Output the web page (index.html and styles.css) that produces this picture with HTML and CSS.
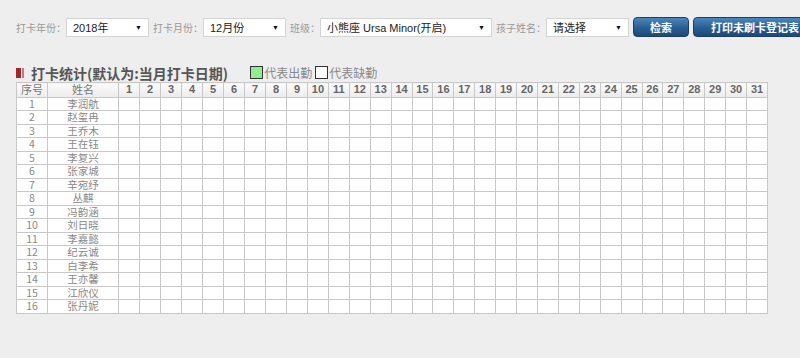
FILE: index.html
```html
<!DOCTYPE html>
<html lang="zh-CN">
<head>
    <meta charset="UTF-8">
    <title>打卡统计</title>
    <link rel="stylesheet" href="styles.css">
</head>
<body>
    <div class="page">
        <!-- 查询条件 -->
        <div class="toolbar">
            <span class="label">打卡年份：</span>
            <div class="select w-sm"><span>2018年</span><i>▼</i></div>
            <span class="label">打卡月份：</span>
            <div class="select w-sm"><span>12月份</span><i>▼</i></div>
            <span class="label">班级：</span>
            <div class="select w-lg"><span>小熊座 Ursa Minor(开启)</span><i>▼</i></div>
            <span class="label">孩子姓名：</span>
            <div class="select w-sm"><span>请选择</span><i>▼</i></div>
            <button type="button" class="btn btn-search">检索</button>
            <button type="button" class="btn btn-print">打印未刷卡登记表</button>
        </div>

        <!-- 标题 + 图例 -->
        <div class="title-row">
            <span class="title-mark"><b></b><b></b></span>
            <h2 class="title">打卡统计(默认为:当月打卡日期)</h2>
            <span class="legend"><span class="box box-on"></span>代表出勤</span>
            <span class="legend"><span class="box"></span>代表缺勤</span>
        </div>

        <table class="grid">
            <thead>
                <tr>
                    <th class="col-no">序号</th><th class="col-name">姓名</th>
                    <th class="d">1</th><th class="d">2</th><th class="d">3</th><th class="d">4</th><th class="d">5</th><th class="d">6</th><th class="d">7</th><th class="d">8</th><th class="d">9</th>
                    <th>10</th><th>11</th><th>12</th><th>13</th><th>14</th><th>15</th><th>16</th><th>17</th><th>18</th><th>19</th><th>20</th>
                    <th>21</th><th>22</th><th>23</th><th>24</th><th>25</th><th>26</th><th>27</th><th>28</th><th>29</th><th>30</th><th>31</th>
                </tr>
            </thead>
            <tbody>
                <tr><td>1</td><td>李润航</td><td></td><td></td><td></td><td></td><td></td><td></td><td></td><td></td><td></td><td></td><td></td><td></td><td></td><td></td><td></td><td></td><td></td><td></td><td></td><td></td><td></td><td></td><td></td><td></td><td></td><td></td><td></td><td></td><td></td><td></td><td></td></tr>
                <tr><td>2</td><td>赵玺冉</td><td></td><td></td><td></td><td></td><td></td><td></td><td></td><td></td><td></td><td></td><td></td><td></td><td></td><td></td><td></td><td></td><td></td><td></td><td></td><td></td><td></td><td></td><td></td><td></td><td></td><td></td><td></td><td></td><td></td><td></td><td></td></tr>
                <tr><td>3</td><td>王乔木</td><td></td><td></td><td></td><td></td><td></td><td></td><td></td><td></td><td></td><td></td><td></td><td></td><td></td><td></td><td></td><td></td><td></td><td></td><td></td><td></td><td></td><td></td><td></td><td></td><td></td><td></td><td></td><td></td><td></td><td></td><td></td></tr>
                <tr><td>4</td><td>王在钰</td><td></td><td></td><td></td><td></td><td></td><td></td><td></td><td></td><td></td><td></td><td></td><td></td><td></td><td></td><td></td><td></td><td></td><td></td><td></td><td></td><td></td><td></td><td></td><td></td><td></td><td></td><td></td><td></td><td></td><td></td><td></td></tr>
                <tr><td>5</td><td>李复兴</td><td></td><td></td><td></td><td></td><td></td><td></td><td></td><td></td><td></td><td></td><td></td><td></td><td></td><td></td><td></td><td></td><td></td><td></td><td></td><td></td><td></td><td></td><td></td><td></td><td></td><td></td><td></td><td></td><td></td><td></td><td></td></tr>
                <tr><td>6</td><td>张家城</td><td></td><td></td><td></td><td></td><td></td><td></td><td></td><td></td><td></td><td></td><td></td><td></td><td></td><td></td><td></td><td></td><td></td><td></td><td></td><td></td><td></td><td></td><td></td><td></td><td></td><td></td><td></td><td></td><td></td><td></td><td></td></tr>
                <tr><td>7</td><td>辛宛纾</td><td></td><td></td><td></td><td></td><td></td><td></td><td></td><td></td><td></td><td></td><td></td><td></td><td></td><td></td><td></td><td></td><td></td><td></td><td></td><td></td><td></td><td></td><td></td><td></td><td></td><td></td><td></td><td></td><td></td><td></td><td></td></tr>
                <tr><td>8</td><td>丛麒</td><td></td><td></td><td></td><td></td><td></td><td></td><td></td><td></td><td></td><td></td><td></td><td></td><td></td><td></td><td></td><td></td><td></td><td></td><td></td><td></td><td></td><td></td><td></td><td></td><td></td><td></td><td></td><td></td><td></td><td></td><td></td></tr>
                <tr><td>9</td><td>冯韵涵</td><td></td><td></td><td></td><td></td><td></td><td></td><td></td><td></td><td></td><td></td><td></td><td></td><td></td><td></td><td></td><td></td><td></td><td></td><td></td><td></td><td></td><td></td><td></td><td></td><td></td><td></td><td></td><td></td><td></td><td></td><td></td></tr>
                <tr><td>10</td><td>刘日晓</td><td></td><td></td><td></td><td></td><td></td><td></td><td></td><td></td><td></td><td></td><td></td><td></td><td></td><td></td><td></td><td></td><td></td><td></td><td></td><td></td><td></td><td></td><td></td><td></td><td></td><td></td><td></td><td></td><td></td><td></td><td></td></tr>
                <tr><td>11</td><td>李嘉懿</td><td></td><td></td><td></td><td></td><td></td><td></td><td></td><td></td><td></td><td></td><td></td><td></td><td></td><td></td><td></td><td></td><td></td><td></td><td></td><td></td><td></td><td></td><td></td><td></td><td></td><td></td><td></td><td></td><td></td><td></td><td></td></tr>
                <tr><td>12</td><td>纪云诚</td><td></td><td></td><td></td><td></td><td></td><td></td><td></td><td></td><td></td><td></td><td></td><td></td><td></td><td></td><td></td><td></td><td></td><td></td><td></td><td></td><td></td><td></td><td></td><td></td><td></td><td></td><td></td><td></td><td></td><td></td><td></td></tr>
                <tr><td>13</td><td>白李希</td><td></td><td></td><td></td><td></td><td></td><td></td><td></td><td></td><td></td><td></td><td></td><td></td><td></td><td></td><td></td><td></td><td></td><td></td><td></td><td></td><td></td><td></td><td></td><td></td><td></td><td></td><td></td><td></td><td></td><td></td><td></td></tr>
                <tr><td>14</td><td>王亦馨</td><td></td><td></td><td></td><td></td><td></td><td></td><td></td><td></td><td></td><td></td><td></td><td></td><td></td><td></td><td></td><td></td><td></td><td></td><td></td><td></td><td></td><td></td><td></td><td></td><td></td><td></td><td></td><td></td><td></td><td></td><td></td></tr>
                <tr><td>15</td><td>江欣仪</td><td></td><td></td><td></td><td></td><td></td><td></td><td></td><td></td><td></td><td></td><td></td><td></td><td></td><td></td><td></td><td></td><td></td><td></td><td></td><td></td><td></td><td></td><td></td><td></td><td></td><td></td><td></td><td></td><td></td><td></td><td></td></tr>
                <tr><td>16</td><td>张丹妮</td><td></td><td></td><td></td><td></td><td></td><td></td><td></td><td></td><td></td><td></td><td></td><td></td><td></td><td></td><td></td><td></td><td></td><td></td><td></td><td></td><td></td><td></td><td></td><td></td><td></td><td></td><td></td><td></td><td></td><td></td><td></td></tr>
            </tbody>
        </table>
    </div>
</body>
</html>
```

FILE: styles.css
```css
body {
    margin: 0;
    background-color: #eeeeee;
    font-family: "Liberation Sans", "Noto Sans CJK SC", sans-serif;
    color: #666;
    overflow: hidden;
}

.page {
    padding: 17px 0 0 16px;
}

/* 查询条件 */
.toolbar {
    display: flex;
    align-items: center;
    height: 20px;
    white-space: nowrap;
}

.toolbar > * {
    flex-shrink: 0;
}

.label {
    font-size: 10px;
    color: #999;
}

.select {
    display: flex;
    align-items: center;
    height: 19px;
    box-sizing: border-box;
    padding: 0 6px 0 6px;
    background-color: #fff;
    border: 1px solid #d4d4d4;
    font-size: 11px;
    color: #222;
    margin-right: 4px;
}

.select i {
    font-style: normal;
    font-size: 7px;
    margin-left: auto;
    color: #111;
}

.w-sm {
    width: 83px;
}

.w-lg {
    width: 172px;
}

.btn {
    height: 20px;
    padding: 0;
    border: 1px solid #1a3f66;
    border-radius: 4px;
    background: linear-gradient(#4a86bd, #2a5e92 55%, #1c4a78);
    color: #fff;
    font-family: "Noto Sans CJK SC", sans-serif;
    font-size: 11px;
    font-weight: bold;
    box-sizing: border-box;
}

.btn-search {
    width: 56px;
    margin-right: 4px;
}

.btn-print {
    width: 112px;
    text-align: left;
    padding-left: 17px;
}

/* 标题 */
.title-row {
    display: flex;
    align-items: center;
    height: 17px;
    margin-top: 27px;
}

.title-mark {
    display: flex;
    align-items: center;
    margin-right: 7px;
}

.title-mark b {
    display: block;
    width: 5px;
    height: 10px;
    background-color: #a3262a;
}

.title-mark b + b {
    width: 2px;
    margin-left: 1px;
    background-color: #c9787a;
}

.title {
    margin: 0;
    font-family: "Noto Sans CJK SC", sans-serif;
    font-size: 14px;
    font-weight: bold;
    color: #555;
    line-height: 16px;
    margin-right: 22px;
}

.legend {
    display: flex;
    align-items: center;
    font-family: "Noto Sans CJK SC", sans-serif;
    font-size: 12px;
    line-height: 14px;
    color: #888;
    margin-right: 3px;
}

.box {
    width: 11px;
    height: 11px;
    border: 1px solid #333;
    background-color: #fff;
    margin-right: 1px;
}

.box-on {
    background-color: #90ee90;
}

/* 表格 */
.grid {
    width: 752px;
    margin-top: 1px;
    table-layout: fixed;
    border-collapse: collapse;
    background-color: #fff;
    border: 1px solid #d0d0d0;
}

.grid th,
.grid td {
    border: 1px solid #c8c8c8;
    padding: 0;
    text-align: center;
    overflow: hidden;
    white-space: nowrap;
}

.grid th {
    height: 13.5px;
    line-height: 13px;
    background: linear-gradient(#fbfbfb, #ececec);
    font-size: 11px;
    font-weight: bold;
    color: #666;
}

.grid th.col-no {
    width: 30px;
}

.grid th.col-name {
    width: 70px;
}

.grid th.col-no,
.grid th.col-name {
    font-family: "Noto Sans CJK SC", sans-serif;
    font-weight: normal;
    font-size: 11px;
    color: #777;
}

.grid th.d {
    width: 20px;
}

.grid td {
    height: 12.5px;
    line-height: 12px;
    font-family: "Noto Sans CJK SC", sans-serif;
    font-size: 10.5px;
    color: #888;
}
```
